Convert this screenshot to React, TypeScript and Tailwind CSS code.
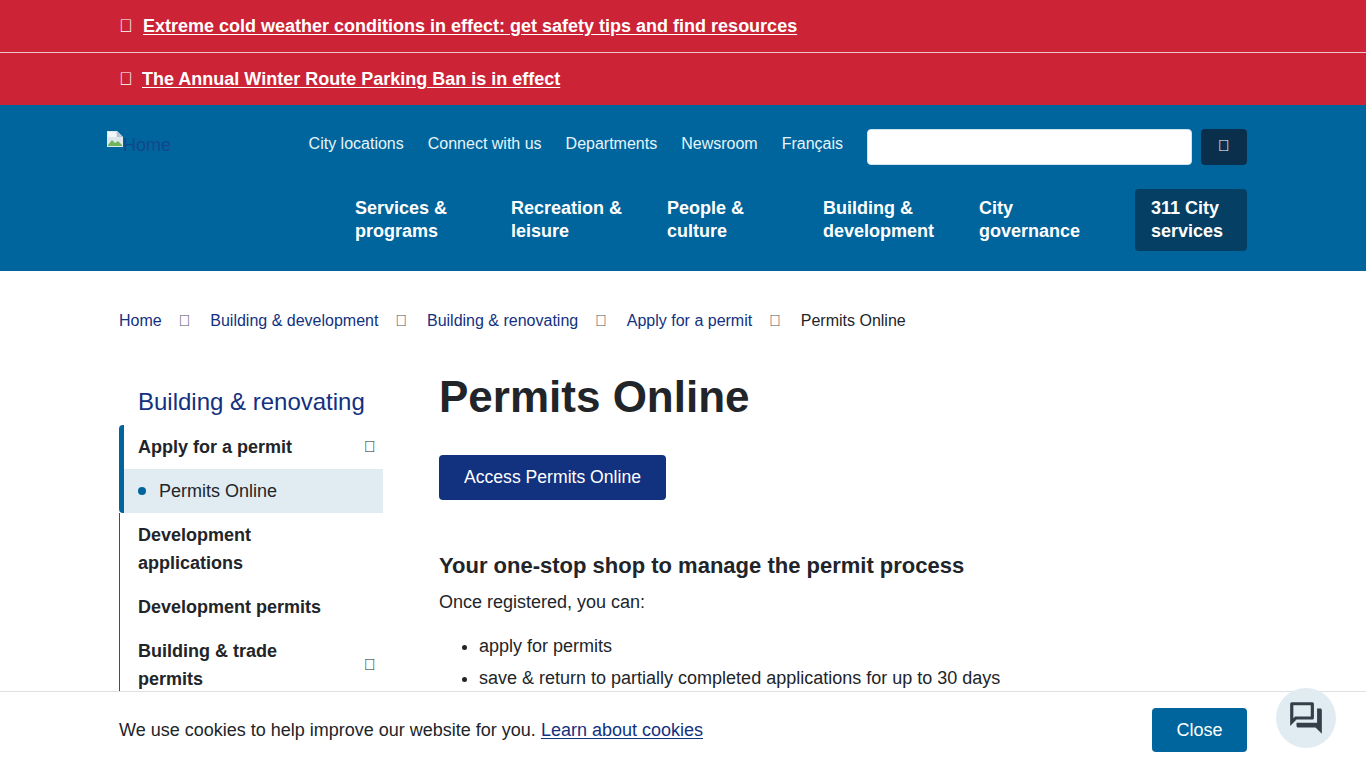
import { MdOutlineForum } from "react-icons/md"

// Icon font never loaded in the reference, so the icons show as missing-glyph boxes
function Tofu({ className = "" }: { className?: string }) {
  return <span className={`inline-block ${className}`}>{"\uf105"}</span>
}

function BrokenImage() {
  return (
    <svg width="16" height="16" viewBox="0 0 16 16" className="shrink-0">
      <path d="M0 0h10l6 6v10H0z" fill="#dfe7ee" />
      <path d="M10 0v6h6z" fill="#b9c6d2" />
      <path d="M1 14l4-5 3 3 3-2 4 4v1H1z" fill="#6fb35a" />
      <path d="M1 1h8v5H1z" fill="#f4f7fa" />
    </svg>
  )
}

const topLinks = ["City locations", "Connect with us", "Departments", "Newsroom", "Français"]

const mainNav = [
  ["Services &", "programs"],
  ["Recreation &", "leisure"],
  ["People &", "culture"],
  ["Building &", "development"],
  ["City", "governance"],
]

const crumbs = ["Home", "Building & development", "Building & renovating", "Apply for a permit"]

export default function App() {
  return (
    <div className="h-[768px] overflow-hidden bg-white text-[18px] text-[#212529] font-['Liberation_Sans',Arial,sans-serif]">
      {/* Alerts */}
      <div className="bg-[#cd2337] text-white font-bold">
        <div className="h-[53px] border-b border-[#f0c4ca] pl-[119px] flex items-center">
          <Tofu className="w-[24px] text-[18px] font-normal" />
          <a className="underline underline-offset-2">Extreme cold weather conditions in effect: get safety tips and find resources</a>
        </div>
        <div className="h-[52px] pl-[119px] flex items-center">
          <Tofu className="w-[23px] text-[18px] font-normal" />
          <a className="underline underline-offset-2">The Annual Winter Route Parking Ban is in effect</a>
        </div>
      </div>

      {/* Header */}
      <header className="h-[166px] bg-[#00659c] pr-[119px]">
        <div className="flex items-start pt-6 pl-[107px]">
          <div className="flex items-start mt-[2px] text-[#12488a]">
            <BrokenImage />
            <span className="leading-[23px] mt-[3px]">Home</span>
          </div>
          <nav className="ml-auto flex items-center gap-6 h-[30px] text-[16px] text-[#e6f4fb]">
            {topLinks.map((link) => (
              <a key={link}>{link}</a>
            ))}
          </nav>
          <input className="ml-6 w-[325px] h-9 bg-white rounded border border-[#cfe2ee]" />
          <button className="ml-[9px] w-[46px] h-9 pb-[2px] bg-[#0a2f4d] rounded text-white text-[16px]">
            <Tofu />
          </button>
        </div>
        <nav className="flex justify-end mt-6 font-bold leading-[23px] text-white">
          {mainNav.map(([a, b]) => (
            <a key={a} className="w-[156px] py-2">
              {a}
              <br />
              {b}
            </a>
          ))}
          <a className="w-[112px] py-2 px-4 bg-[#053f63] rounded">
            311 City
            <br />
            services
          </a>
        </nav>
      </header>

      {/* Breadcrumbs */}
      <nav className="pl-[119px] mt-[38px] flex items-center h-[23px] text-[16px] text-[#12317f]">
        {crumbs.map((c) => (
          <span key={c} className="flex items-center">
            <a>{c}</a>
            <Tofu className="w-[48.6px] pl-[17px] text-[#4a5560]" />
          </span>
        ))}
        <span className="text-[#212529]">Permits Online</span>
      </nav>

      <div className="flex pl-[119px] mt-[38px]">
        {/* Sidebar */}
        <aside className="w-[264px] shrink-0 pt-[17px]">
          <h2 className="pl-[19px] text-[24px] leading-[30px] text-[#12317f] mb-2">Building & renovating</h2>
          <div className="border-l-[5px] border-[#00659c] rounded-l">
            <div className="h-11 pl-[14px] pr-[9px] flex items-center justify-between font-bold">
              Apply for a permit
              <Tofu className="w-[10px] text-[16px] font-normal text-[#212529]" />
            </div>
            <div className="h-11 pl-[14px] flex items-center bg-[#e1ecf2]">
              <span className="w-2 h-2 rounded-full bg-[#00659c] mr-[13px]" />
              Permits Online
            </div>
          </div>
          <div className="border-l border-[#00659c]">
            <div className="pl-[18px] py-2 font-bold leading-7">
              Development
              <br />
              applications
            </div>
            <div className="pl-[18px] py-2 font-bold leading-7">Development permits</div>
            <div className="pl-[18px] pr-[9px] py-2 font-bold leading-7 flex items-center justify-between">
              <span>
                Building & trade
                <br />
                permits
              </span>
              <Tofu className="w-[10px] text-[16px] font-normal text-[#212529]" />
            </div>
          </div>
        </aside>

        {/* Main content */}
        <main className="ml-14 flex-1">
          <h1 className="text-[44px] leading-[53px] font-bold">Permits Online</h1>
          <a className="inline-block mt-[32px] h-[45px] px-[25px] leading-[44px] text-[17.6px] bg-[#12317f] text-white rounded">
            Access Permits Online
          </a>
          <h2 className="mt-[52px] text-[22px] leading-7 font-bold">Your one-stop shop to manage the permit process</h2>
          <p className="mt-[8px] leading-7">Once registered, you can:</p>
          <ul className="mt-[14px] ml-10 list-disc leading-8">
            <li>apply for permits</li>
            <li>save & return to partially completed applications for up to 30 days</li>
          </ul>
        </main>
      </div>

      {/* Cookie notice */}
      <div className="fixed bottom-0 left-0 right-0 h-[77px] bg-white border-t border-[#dde1e5] pl-[119px] pr-[119px] flex items-center justify-between">
        <p className="mt-[1px]">
          We use cookies to help improve our website for you.{" "}
          <a className="text-[#12317f] underline underline-offset-2">Learn about cookies</a>
        </p>
        <button className="w-[95px] h-11 -mt-[1px] pt-[1px] bg-[#00659c] text-white rounded">Close</button>
      </div>

      {/* Chat */}
      <button className="fixed left-[1276px] top-[688px] w-[60px] h-[60px] rounded-full bg-[#e1ecf2] flex items-center justify-center text-[#343f4a]">
        <MdOutlineForum size={38} />
      </button>
    </div>
  )
}
